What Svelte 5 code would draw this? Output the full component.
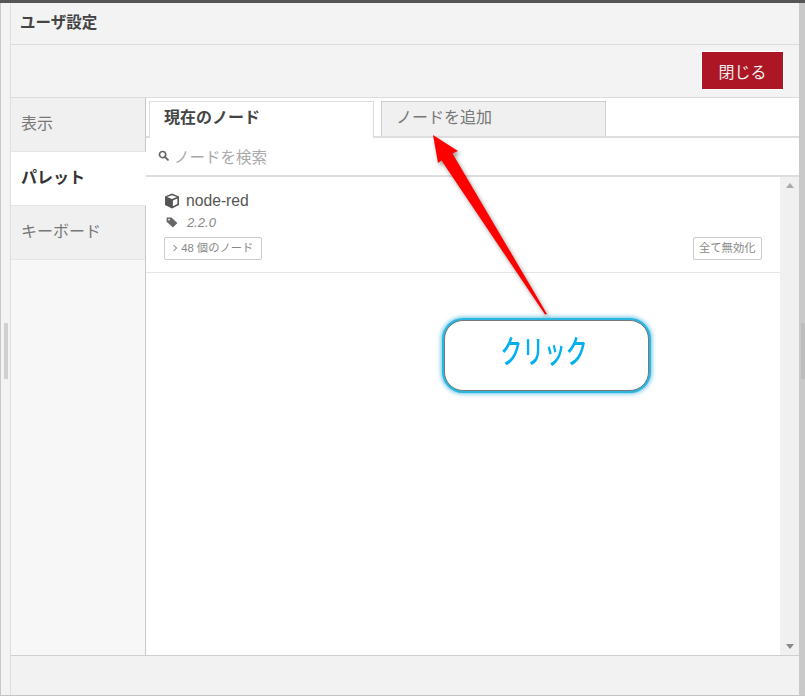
<script>
  const sideTabs = [
    { label: '表示', active: false },
    { label: 'パレット', active: true },
    { label: 'キーボード', active: false }
  ];
</script>

<div class="page">
  <div class="topbar"></div>
  <div class="frame">
    <div class="gutter left"><span class="handle"></span></div>
    <div class="dialog">
      <header class="title">ユーザ設定</header>
      <div class="toolbar"><button class="close">閉じる</button></div>
      <div class="body">
        <nav class="side">
          {#each sideTabs as t}
            <div class="sidetab" class:active={t.active}>{t.label}</div>
          {/each}
        </nav>
        <main class="content">
          <div class="tabs">
            <div class="tab on">現在のノード</div>
            <div class="tab">ノードを追加</div>
          </div>
          <div class="search">
            <svg class="mag" viewBox="0 0 12 12" width="11" height="11" aria-hidden="true">
              <circle cx="5" cy="5" r="3.4" fill="none" stroke="#666" stroke-width="1.8" />
              <path d="M7.6 7.6 10.8 10.8" stroke="#666" stroke-width="2" stroke-linecap="round" />
            </svg>
            <span>ノードを検索</span>
          </div>
          <div class="listwrap">
            <div class="list">
              <div class="item">
                <div class="name">
                  <svg viewBox="0 0 16 16" width="16" height="16" aria-hidden="true">
                    <path d="M8 .6 15 3.4V12L8 15.4 1 12V3.4Z" fill="#555" />
                    <path d="M8 2.2 12.9 4.1 8 6 3.1 4.1Z" fill="#fff" />
                    <path d="M8.9 7.5 13.4 5.6V11L8.9 13.2Z" fill="#fff" />
                  </svg>
                  <span>node-red</span>
                </div>
                <div class="ver">
                  <svg viewBox="0 0 12 12" width="12" height="12" aria-hidden="true">
                    <path d="M.6 1.4H5.4L11.4 7 7 11.4 .6 5.8Z" fill="#666" />
                    <circle cx="3" cy="3.6" r="0.9" fill="#fff" />
                  </svg>
                  <i>2.2.0</i>
                </div>
                <div class="actions">
                  <span class="mini wide">
                    <svg viewBox="0 0 8 10" width="6" height="8" aria-hidden="true">
                      <path d="M2 1 6 5 2 9" fill="none" stroke="#888" stroke-width="1.4" />
                    </svg>
                    48 個のノード
                  </span>
                  <span class="mini">全て無効化</span>
                </div>
              </div>
            </div>
            <div class="scroll">
              <span class="up"></span>
              <span class="down"></span>
            </div>
          </div>
        </main>
      </div>
      <footer class="foot"></footer>
    </div>
    <div class="gutter right"><span class="handle"></span></div>
  </div>

  <svg class="arrow" viewBox="0 0 805 696" width="805" height="696" aria-hidden="true">
    <polygon points="433,135 458,151 452.5,153.5 547,314 545,314.5 441.5,160.5 438,163" fill="#ff0000" />
  </svg>
  <div class="callout"><span>クリック</span></div>
</div>

<style>
  :global(body) {
    margin: 0;
    background: #fff;
  }
  .page {
    position: relative;
    width: 805px;
    height: 696px;
    overflow: hidden;
    display: flex;
    flex-direction: column;
    font-family: "Liberation Sans", "Noto Sans CJK JP", sans-serif;
    color: #555;
    box-sizing: border-box;
    border-bottom: 1px solid #c4c4c4;
  }
  .topbar {
    height: 3px;
    background: #555;
    flex: none;
  }
  .frame {
    flex: 1;
    min-height: 0;
    display: flex;
    background: #f3f3f3;
  }
  .gutter {
    flex: none;
    display: flex;
    align-items: center;
    box-sizing: border-box;
    position: relative;
  }
  .gutter.left {
    width: 11px;
    background: #f3f3f3;
    border-left: 1px solid #c8c8c8;
    border-right: 1px solid #dedede;
  }
  .gutter.right {
    width: 6px;
    background: #c9c9c9;
  }
  .gutter .handle {
    display: block;
    width: 4px;
    height: 56px;
    background: #d0d0d0;
    margin-left: 3px;
    margin-top: 3px;
  }
  .gutter.right .handle {
    background: #bdbdbd;
    margin-left: 2px;
  }
  .dialog {
    flex: 1;
    min-width: 0;
    display: flex;
    flex-direction: column;
  }
  .title {
    height: 42px;
    flex: none;
    box-sizing: border-box;
    border-bottom: 1px solid #dcdcdc;
    padding-left: 9px;
    font-size: 15.5px;
    font-weight: 700;
    line-height: 39px;
    color: #444;
    background: #f3f3f3;
  }
  .toolbar {
    height: 53px;
    flex: none;
    box-sizing: border-box;
    border-bottom: 1px solid #dcdcdc;
    display: flex;
    justify-content: flex-end;
    padding: 6px 15px 0 0;
    background: #f3f3f3;
  }
  .close {
    width: 83px;
    height: 39px;
    border: 1px solid #fff;
    background: #ad1625;
    color: #eee;
    font: 16px "Liberation Sans", "Noto Sans CJK JP", sans-serif;
    padding: 0;
  }
  .body {
    flex: 1;
    min-height: 0;
    display: flex;
    background: #fff;
  }
  .side {
    width: 135px;
    flex: none;
    box-sizing: border-box;
    background: #f7f7f7;
    border-right: 1px solid #c8c8c8;
  }
  .sidetab {
    height: 54px;
    box-sizing: border-box;
    border-bottom: 1px solid #e4e4e4;
    background: #f0f0f0;
    color: #777;
    font-size: 16px;
    line-height: 52px;
    padding-left: 10px;
    width: 134px;
  }
  .sidetab.active {
    background: #fff;
    color: #333;
    font-weight: 700;
    width: 135px;
    position: relative;
  }
  .content {
    flex: 1;
    min-width: 0;
    display: flex;
    flex-direction: column;
  }
  .tabs {
    height: 40px;
    flex: none;
    box-sizing: border-box;
    padding: 3px 0 0 3px;
    display: flex;
    gap: 7px;
    border-bottom: 2px solid #dedede;
  }
  .tab {
    width: 225px;
    height: 35px;
    box-sizing: border-box;
    border: 1px solid #cfcfcf;
    border-bottom: 0;
    background: #f0f0f0;
    color: #777;
    font-size: 16px;
    line-height: 31px;
    padding-left: 14px;
  }
  .tab.on {
    height: 37px;
    background: #fff;
    color: #444;
    font-weight: 700;
    border-color: #dcdcdc;
    position: relative;
  }
  .search {
    height: 39px;
    flex: none;
    box-sizing: border-box;
    border-bottom: 2px solid #dedede;
    display: flex;
    align-items: center;
    gap: 5px;
    padding: 0 0 2px 12px;
    color: #aaa;
    font-size: 15.5px;
  }
  .listwrap {
    flex: 1;
    min-height: 0;
    display: flex;
  }
  .list {
    flex: 1;
    min-width: 0;
  }
  .item {
    height: 96px;
    box-sizing: border-box;
    border-bottom: 1px solid #e6e6e6;
    padding: 15px 18px 0 18px;
  }
  .name {
    display: flex;
    align-items: center;
    gap: 6px;
    height: 18px;
    font-size: 15.7px;
    color: #555;
  }
  .ver {
    display: flex;
    align-items: center;
    gap: 9px;
    height: 18px;
    margin-top: 3px;
    padding-left: 2px;
    font-size: 13px;
    color: #888;
  }
  .actions {
    display: flex;
    justify-content: space-between;
    margin-top: 6px;
  }
  .mini {
    height: 23px;
    box-sizing: border-box;
    border: 1px solid #ccc;
    border-radius: 2px;
    padding: 0 5.5px;
    font-size: 11.3px;
    line-height: 21px;
    color: #888;
    background: #fff;
  }
  .mini.wide {
    width: 98px;
    padding-left: 7px;
    white-space: nowrap;
  }
  .scroll {
    width: 19px;
    flex: none;
    background: #f0f0f0;
    display: flex;
    flex-direction: column;
    justify-content: space-between;
    align-items: center;
    padding: 6px 0 6px;
  }
  .up,
  .down {
    width: 0;
    height: 0;
    border-left: 4.5px solid transparent;
    border-right: 4.5px solid transparent;
  }
  .up {
    border-bottom: 5px solid #aaa;
  }
  .down {
    border-top: 5px solid #888;
  }
  .foot {
    height: 40px;
    flex: none;
    box-sizing: border-box;
    border-top: 1px solid #cfcfcf;
    background: #f2f2f2;
  }
  .arrow {
    position: absolute;
    left: 0;
    top: 0;
    pointer-events: none;
    filter: drop-shadow(2px 3px 2px rgba(0, 0, 0, 0.4));
  }
  .callout {
    position: absolute;
    left: 444px;
    top: 320px;
    width: 205px;
    height: 71px;
    box-sizing: border-box;
    border: 1px solid #777;
    border-radius: 19px;
    background: #fff;
    box-shadow: 0 0 0 2px #29b6e0, 0 0 4px 3px rgba(41, 170, 220, 0.7);
    display: flex;
    align-items: center;
    justify-content: center;
    padding-right: 4px;
    color: #00b0f0;
    font-family: "Noto Sans CJK JP", sans-serif;
    font-size: 32px;
    font-weight: 500;
  }
  .callout span {
    display: inline-block;
    transform: scaleX(0.68);
    margin-top: -13px;
    white-space: nowrap;
  }
</style>
